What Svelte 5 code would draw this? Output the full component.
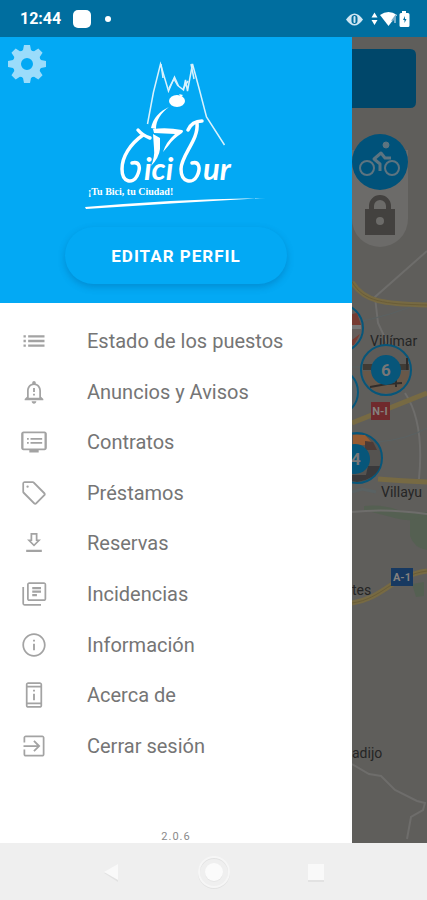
<script lang="ts">
    interface MenuItem {
        label: string;
        icon: string;
    }

    const items: MenuItem[] = [
        {
            label: "Estado de los puestos",
            icon: "M3 13h2v-2H3v2zm0 4h2v-2H3v2zm0-8h2V7H3v2zm4 4h14v-2H7v2zm0 4h14v-2H7v2zM7 7v2h14V7H7z",
        },
        {
            label: "Anuncios y Avisos",
            icon: "M18 16v-5c0-3.07-1.63-5.64-4.5-6.32V4c0-.83-.67-1.5-1.5-1.5s-1.5.67-1.5 1.5v.68C7.64 5.36 6 7.92 6 11v5l-2 2v1h16v-1l-2-2zm-1.5 1h-9v-6c0-2.6 1.8-5 4.5-5s4.5 2.4 4.5 5v6zM12 22c1.1 0 2-.9 2-2h-4c0 1.1.9 2 2 2zM11.2 8.500h1.6v3.500h-1.6zM11.2 13.500h1.6v1.600h-1.6z",
        },
        {
            label: "Contratos",
            icon: "M21 3H3c-1.1 0-2 .9-2 2v12c0 1.100.9 2 2 2h5v2h8v-2h5c1.100 0 2-.9 2-2V5c0-1.100-.9-2-2-2zm0 14.500H3v-13h18v13zM19 8.500H9V10h10V8.500zm0 3.500H9v1.500h10V12zM7.500 8.500H6V10h1.500V8.500zm0 3.500H6v1.500h1.500V12z",
        },
        {
            label: "Préstamos",
            icon: "M21.410 11.580l-9-9C12.050 2.220 11.550 2 11 2H4c-1.100 0-2 .9-2 2v7c0 .55.22 1.050.59 1.420l9 9c.36.36.86.58 1.410.58s1.050-.22 1.410-.59l7-7c.37-.36.59-.86.59-1.410s-.23-1.060-.59-1.420zM13 20.500L3.500 11V3.500H11l9.500 9.500-7.500 7.500zM5.500 6.500a1 1 0 1 0 2 0a1 1 0 1 0-2 0z",
        },
        {
            label: "Reservas",
            icon: "M15 9V3.500H9V9H6l6 6 6-6zM10.500 10.300V5h3v5.300h1.200L12 13 9.300 10.300zM5.300 17.800h13.400v2H5.300z",
        },
        {
            label: "Incidencias",
            icon: "M3.500 6H2v14c0 1.100.9 2 2 2h14v-1.500H3.500V6zM20.500 2H8c-1.100 0-2 .9-2 2v12c0 1.100.9 2 2 2h12.500c1.100 0 2-.9 2-2V4c0-1.100-.9-2-2-2zm.5 14.500H7.500v-13H21v13zM10.500 9h7.500v2h-7.500zM10.500 12h4v2h-4zM10.500 6h7.500v2h-7.500z",
        },
        {
            label: "Información",
            icon: "M11.200 16.500h1.600v-5.500h-1.600v5.500zM12 2C6.480 2 2 6.480 2 12s4.480 10 10 10 10-4.480 10-10S17.520 2 12 2zm0 18.500c-4.700 0-8.500-3.800-8.500-8.500S7.300 3.500 12 3.500s8.500 3.800 8.500 8.500-3.800 8.500-8.500 8.500zM11.200 9.100h1.600V7.500h-1.600v1.600z",
        },
        {
            label: "Acerca de",
            icon: "M12.800 7.500h-1.600v1.600h1.600V7.500zm0 3.500h-1.600v5.500h1.600V11zM17 1H7c-1.100 0-2 .9-2 2v18c0 1.100.9 2 2 2h10c1.100 0 2-.9 2-2V3c0-1.100-.9-2-2-2zm.5 20.500h-11V20h11v1.500zm0-3h-11v-13h11v13zm0-14.500h-11V2.500h11V4z",
        },
        {
            label: "Cerrar sesión",
            icon: "M11.400 15.900l1.100 1.100 5-5-5-5-1.100 1.100 3.100 3.200H3v1.500h11.500l-3.100 3.100zM19 3H5c-1.110 0-2 .9-2 2v4h1.500V4.500h15v15h-15V15H3v4c0 1.100.89 2 2 2h14c1.100 0 2-.9 2-2V5c0-1.100-.9-2-2-2z",
        },
    ];

    const teeth = [0, 45, 90, 135, 180, 225, 270, 315];
    const version = "2.0.6";
</script>

<div class="screen">
    <div class="status">
        <span class="clock">12:44</span>
        <span class="app-square"></span>
        <span class="dot"></span>
        <svg class="status-icons" viewBox="344 8 68 20" aria-hidden="true">
            <path d="M346 18.500q8.500-12 17 0q-8.500 12-17 0z" fill="#cfe6f2" />
            <rect x="351.500" y="14" width="6" height="9" rx="3" fill="#006e9f" />
            <rect x="353.500" y="15" width="2" height="7" rx="1" fill="#cfe6f2" />
            <path d="M374.500 11.500l3 5h-6zM374.500 24l3-5h-6z" fill="#fff" />
            <path d="M380 14q8.500-6 17 0l-8.500 11z" fill="#fff" />
            <path d="M392 20l3-4v6" stroke="#78aecb" stroke-width="2" fill="none" />
            <path
                d="M402 10h4v2h2q1.500 0 1.500 1.500v11q0 1.500-1.500 1.500h-7q-1.500 0-1.500-1.500v-11q0-1.500 1.500-1.500h1z"
                fill="#fff"
            />
            <path d="M405 15l-2 4h1.500v3l2-4h-1.500z" fill="#006e9f" />
        </svg>
    </div>

    <div class="content">
        <aside class="drawer">
            <header>
                <button class="settings" aria-label="Ajustes">
                    <svg viewBox="-19 -19 38 38">
                        {#each teeth as angle}
                            <path
                                d="M-3-19h6l1 5 3 3h-14l3-3z"
                                transform="rotate({angle})"
                            />
                        {/each}
                        <circle r="10" fill="none" />
                    </svg>
                </button>
                <svg class="logo" viewBox="80 45 192 168" role="img" aria-label="Bicibur">
                    <!-- cathedral towers -->
                    <g class="line">
                        <path d="M147.500 124l6-32 7-28 8 27 6-14 4 9 5 4 2-10 2 11 5-27 7 26 7 27 18 28" />
                        <path d="M161 64l2 14M191 64l3 15M169 88l5-9 4 7M183 89l5-8" />
                    </g>
                    <ellipse cx="177" cy="101" rx="8" ry="6" fill="#fff" />
                    <g class="fill">
                        <path d="M169 107c-9 4-16 11-18 21l5 1c0-9 5-16 13-22z" />
                        <path d="M153 129q14-2 29 1q2 1 0 3-9 6-13 12l-6 7q3-10 12-18l-21-1z" />
                        <path d="M153 134l7 4v11q-1 9-9 17 4-9 3-18z" />
                        <path d="M179 94l4 1-2 2z" />
                    </g>
                    <!-- handlebar and fork of each wheel -->
                    <g class="wheel">
                        <path d="M138 130q4 5 12 8" />
                        <path d="M143 135C130 144 122 157 122 169C122 183 133 184 137 176C141 168 140 161 132 163" />
                        <path d="M188 130q4-9 14-9" />
                        <path d="M197 123C199 140 181 155 181 169C181 183 193 184 197 176C201 168 199 161 192 163" />
                    </g>
                    <text class="word" x="144" y="180">ici</text>
                    <text class="word" x="203" y="180">ur</text>
                    <text class="tagline" x="88" y="195">¡Tu Bici, tu Ciudad!</text>
                    <path d="M85 207q90-8 181-9q-90 5-180 11z" fill="#fff" />
                </svg>
                <button class="profile">EDITAR PERFIL</button>
            </header>

            <nav class="menu">
                {#each items as item}
                    <a href="#menu">
                        <svg viewBox="0 0 24 24" aria-hidden="true">
                            <path fill-rule="evenodd" d={item.icon} />
                        </svg>
                        <span>{item.label}</span>
                    </a>
                {/each}
            </nav>

            <footer>{version}</footer>
        </aside>

        <div class="map">
            <svg viewBox="352 37 75 806" preserveAspectRatio="xMinYMin slice">
                <rect x="352" y="37" width="75" height="806" fill="#5f5e5b" />

                <g class="park">
                    <path d="M364 506q18-2 34 4 16 4 29 2v8q-20 2-36-3-16-4-27-7z" />
                    <path d="M410 520l17-4v34q-13-2-17-14zM412 584l12-2v14l-8 1z" />
                </g>
                <g class="street">
                    <path d="M427 251l-52 46 3 26 14 30M405 393c12 18 18 45 14 86M352 512q34-4 75 2" />
                    <path d="M352 764l17 10 12 2 14 14 22 11 8 2-2 7-12 7-4 22" />
                </g>
                <g class="water">
                    <path d="M352 323q40-7 75-23M352 367h14M378 442q30-3 49-14" />
                    <path d="M352 492l10-3 14 3" stroke="#4d6672" stroke-width="3" />
                </g>
                <g class="road">
                    <path d="M352 282c12 20 32 22 75 23M352 423l75-30M378 479q24 2 49 3M352 603c30-4 40-27 75-32" />
                </g>
                <g class="road-core">
                    <path d="M352 282c12 20 32 22 75 23M352 603c30-4 40-27 75-32" />
                </g>

                <text class="place" x="370" y="346">Villímar</text>
                <text class="place" x="381" y="497">Villayu</text>
                <text class="place" x="352" y="595">tes</text>
                <text class="place" x="352" y="758">adijo</text>

                <!-- station photos -->
                <g stroke="#07567a" stroke-width="2">
                    <circle cx="339" cy="328" r="24" fill="#655e5b" />
                    <circle cx="334" cy="392" r="24" fill="#5c6265" />
                    <circle cx="386" cy="370" r="25" fill="#5d5b58" />
                    <circle cx="357" cy="458" r="25" fill="#555350" />
                </g>
                <path d="M352 314l5-1 4 12-9 3zM352 340l8-6-6 11h-2z" fill="#773b32" />
                <path d="M352 325h9v4h-9z" fill="#777" />
                <path d="M363 364h46v6h-46z" fill="#403b35" />
                <path d="M363 371h46q-1 21-23 22-19 0-23-22z" fill="#685849" />
                <path d="M370 387l17-3 15-1M396 375v12M407 358v12" stroke="#302d2b" stroke-width="2" fill="none" />
                <path d="M353 435h12l9 10h-21z" fill="#965b31" />
                <path d="M365 441l8 1 4 8h-12z" fill="#4d3b36" />
                <path d="M368 466h12q-4 13-23 16l-5-1v-6h14z" fill="#39393b" />
                <g fill="#07567a">
                    <circle cx="386" cy="370" r="15" />
                    <circle cx="355" cy="459" r="15" />
                </g>
                <text class="count" x="386" y="376">6</text>
                <text class="count" x="356" y="465">4</text>

                <rect x="371" y="402" width="19" height="18" fill="#702a2d" />
                <text class="sign" x="380" y="415">N-I</text>
                <rect x="391" y="568" width="22" height="18" fill="#173961" />
                <text class="sign" x="402" y="581">A-1</text>

                <path d="M340 49h70q6 0 6 6v47q0 6-6 6h-70z" fill="#00476a" />
                <path d="M352 150h56v69a28 28 0 0 1-56 0z" fill="#6c6b69" />
                <circle cx="380" cy="162" r="28" fill="#00527a" />
                <g class="bike">
                    <circle cx="367" cy="168" r="7" stroke-width="2" />
                    <circle cx="392" cy="168" r="7" stroke-width="2" />
                    <path d="M380 171v-7l-6-5 7-6 4 5h6" stroke-width="3" />
                    <circle cx="386" cy="145" r="3" class="head" />
                </g>
                <path
                    d="M365 209h4v-3a11 11 0 0 1 22 0v3h4v26h-30zM374 209h12v-3a6 6 0 0 0-12 0z"
                    fill="#43413f"
                    fill-rule="evenodd"
                />
                <circle cx="380" cy="221" r="4" fill="#6c6b69" />
            </svg>
        </div>
    </div>

    <div class="navbar">
        <button aria-label="Atrás">
            <svg viewBox="0 0 36 36">
                <path d="M10 19l14-8v17z" fill="#e2e2e2" />
                <path d="M10 18l14-8v16z" fill="#f9f9f9" />
            </svg>
        </button>
        <button aria-label="Inicio">
            <svg viewBox="0 0 36 36">
                <circle cx="18" cy="19" r="15" fill="none" stroke="#e2e2e2" stroke-width="2" />
                <circle cx="18" cy="18" r="15" fill="none" stroke="#f6f6f6" stroke-width="2" />
                <circle cx="18" cy="19" r="9" fill="#e6e6e6" />
                <circle cx="18" cy="18" r="9" fill="#fbfbfb" />
            </svg>
        </button>
        <button aria-label="Recientes">
            <svg viewBox="0 0 36 36">
                <path d="M10 11h16v17H10z" fill="#e2e2e2" />
                <path d="M10 10h16v16H10z" fill="#f9f9f9" />
            </svg>
        </button>
    </div>
</div>

<style>
    :global(body) {
        margin: 0;
    }

    .screen {
        display: flex;
        flex-direction: column;
        min-height: 100vh;
        font-family: Roboto, "Liberation Sans", sans-serif;
        background: #fff;
    }

    button {
        border: 0;
        padding: 0;
        background: none;
        font-family: inherit;
        cursor: pointer;
    }

    svg {
        display: block;
    }

    .status {
        display: flex;
        align-items: center;
        gap: 12px;
        height: 37px;
        padding: 0 15px 0 20px;
        background: #006e9f;
        color: #fff;
    }

    .clock {
        font-size: 16px;
        font-weight: 700;
    }

    .app-square {
        width: 18px;
        height: 18px;
        border-radius: 5px;
        background: #fff;
    }

    .dot {
        width: 6px;
        height: 6px;
        margin-left: 2px;
        border-radius: 50%;
        background: #fff;
    }

    .status-icons {
        width: 68px;
        height: 20px;
        margin-left: auto;
    }

    .content {
        display: flex;
        flex: 1;
    }

    .drawer {
        display: flex;
        flex-direction: column;
        flex: 0 0 352px;
        background: #fff;
    }

    header {
        display: grid;
        justify-items: center;
        padding: 8px 8px 19px;
        background: #03a9f4;
    }

    .settings {
        grid-area: 1 / 1;
        place-self: start;
        width: 38px;
        height: 38px;
    }

    .settings path {
        fill: #9bdcfb;
    }

    .settings circle {
        stroke: #9bdcfb;
        stroke-width: 8;
    }

    .logo {
        grid-area: 1 / 1;
        width: 192px;
        height: 168px;
    }

    .line path {
        fill: none;
        stroke: #d9f2fd;
        stroke-width: 1.5;
    }

    .fill path {
        fill: #fff;
    }

    .wheel path {
        fill: none;
        stroke: #fff;
        stroke-width: 3.5;
        stroke-linecap: round;
    }

    .word {
        fill: #fff;
        font: italic 700 31px Lato, sans-serif;
    }

    .tagline {
        fill: #fff;
        font: 700 10px "Liberation Serif", serif;
    }

    .profile {
        width: 222px;
        height: 57px;
        margin-top: 14px;
        border-radius: 29px;
        background: #03a9f4;
        color: #fff;
        font-size: 17px;
        font-weight: 700;
        letter-spacing: 1px;
        box-shadow: 0 3px 7px rgba(0, 60, 110, 0.25);
    }

    .menu {
        display: grid;
        grid-auto-rows: 1fr;
        flex: 1;
        padding-top: 13px;
    }

    .menu a {
        display: flex;
        align-items: center;
        gap: 39px;
        padding-left: 20px;
        color: #757575;
        font-size: 20px;
        text-decoration: none;
    }

    .menu svg {
        width: 28px;
        height: 28px;
        fill: #a3a3a3;
    }

    footer {
        display: flex;
        align-items: flex-end;
        justify-content: center;
        height: 72px;
        color: #8a8a8a;
        font-size: 11px;
        letter-spacing: 1px;
    }

    .map {
        display: grid;
        flex: 1;
        min-width: 0;
        overflow: hidden;
        background: #5f5e5b;
    }

    .map svg {
        width: 100%;
        height: 100%;
    }

    .park path {
        fill: #556052;
    }

    .street path {
        fill: none;
        stroke: #6e6d6b;
        stroke-width: 2;
    }

    .water path {
        fill: none;
        stroke: #5a6263;
    }

    .road path {
        fill: none;
        stroke: #776a43;
        stroke-width: 5;
    }

    .road-core path {
        fill: none;
        stroke: #6a5d37;
        stroke-width: 1;
    }

    .place {
        fill: #252525;
        font-size: 14px;
    }

    .count {
        fill: #777;
        font-size: 17px;
        font-weight: 700;
        text-anchor: middle;
    }

    .sign {
        fill: #85817f;
        font-size: 11px;
        font-weight: 700;
        text-anchor: middle;
    }

    .bike {
        fill: none;
        stroke: #5d7480;
        stroke-linejoin: round;
    }

    .bike .head {
        fill: #5d7480;
    }

    .navbar {
        display: flex;
        align-items: center;
        justify-content: center;
        gap: 54px;
        height: 57px;
        background: #efefef;
    }

    .navbar button {
        display: grid;
        place-items: center;
        width: 48px;
        height: 48px;
    }

    .navbar svg {
        width: 36px;
        height: 36px;
    }
</style>
